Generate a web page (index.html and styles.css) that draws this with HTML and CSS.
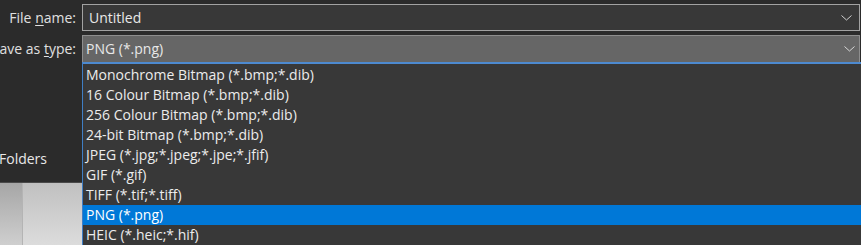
FILE: index.html
```html
<!DOCTYPE html>
<html>
<head>
<meta charset="utf-8">
<link rel="stylesheet" href="styles.css">
</head>
<body>
<div class="dialog">
  <div class="row row-name">
    <div class="label"><span>File <u>n</u>ame:</span></div>
    <div class="field input">
      <span class="value">Untitled</span>
      <svg class="chev" width="11" height="6" viewBox="0 0 11 6"><path d="M0.5 0.5 L5.5 5 L10.5 0.5" fill="none" stroke="#d0d0d0" stroke-width="1"/></svg>
    </div>
  </div>
  <div class="row row-type">
    <div class="label"><span>Save as <u>t</u>ype:</span></div>
    <div class="field combo">
      <span class="value">PNG (*.png)</span>
      <svg class="chev" width="11" height="6" viewBox="0 0 11 6"><path d="M0.5 0.5 L5.5 5 L10.5 0.5" fill="none" stroke="#d8d8d8" stroke-width="1"/></svg>
    </div>
  </div>
  <div class="lower">
    <div class="side">
      <div class="folders">Folders</div>
      <div class="preview">
        <div class="pane pane-a"></div>
        <div class="pane pane-b"></div>
      </div>
    </div>
    <ul class="list">
      <li>Monochrome Bitmap (*.bmp;*.dib)</li>
      <li>16 Colour Bitmap (*.bmp;*.dib)</li>
      <li>256 Colour Bitmap (*.bmp;*.dib)</li>
      <li>24-bit Bitmap (*.bmp;*.dib)</li>
      <li>JPEG (*.jpg;*.jpeg;*.jpe;*.jfif)</li>
      <li>GIF (*.gif)</li>
      <li>TIFF (*.tif;*.tiff)</li>
      <li class="selected">PNG (*.png)</li>
      <li>HEIC (*.heic;*.hif)</li>
    </ul>
  </div>
</div>
</body>
</html>
```
FILE: styles.css
```css
html, body {
  margin: 0;
  padding: 0;
  background: #2b2b2b;
  overflow: hidden;
}
body {
  width: 861px;
  height: 245px;
  font-family: "Open Sans", "Noto Sans", sans-serif;
  font-size: 14px;
  color: #e8e8e8;
}
.dialog {
  display: flex;
  flex-direction: column;
  height: 245px;
}
.row {
  display: grid;
  grid-template-columns: 82px 778px;
  align-items: center;
}
.row-name {
  margin-top: 4px;
  height: 27px;
}
.row-type {
  margin-top: 4px;
  height: 27px;
}
.label {
  display: flex;
  justify-content: flex-end;
  padding-right: 6px;
  color: #e0e0e0;
  white-space: nowrap;
  overflow: hidden;
}
.label span {
  flex: none;
}
.label u {
  text-decoration-thickness: 1px;
  text-underline-offset: 2px;
}
.field {
  box-sizing: border-box;
  height: 27px;
  display: flex;
  align-items: center;
  justify-content: space-between;
  border: 1px solid #a2a2a2;
}
.input {
  background: #383838;
  padding: 0 7px 0 6px;
}
.combo {
  background: #666666;
  border-color: #8e8e8e;
  border-bottom: none;
  padding: 0 7px 0 3px;
}
.value {
  line-height: 1;
}
.chev {
  display: block;
}
.combo .chev { margin-right: -3px; }
.lower {
  display: grid;
  grid-template-columns: 82px 779px;
  flex: 1;
  min-height: 0;
}
.side {
  display: flex;
  flex-direction: column;
  justify-content: flex-end;
  overflow: hidden;
}
.folders {
  color: #e8e8e8;
  margin-left: -1px;
  margin-bottom: 13px;
  line-height: 20px;
}
.preview {
  height: 62px;
  display: flex;
  border-top: 1px solid #4a4a4a;
}
.pane {
  height: 100%;
}
.pane-a {
  width: 22px;
  background: linear-gradient(#a6a6a6, #cfcfcf);
  border-right: 1px solid #b4b4b4;
}
.pane-b {
  flex: 1;
  background: linear-gradient(#c0c0c0, #dcdcdc);
}
.list {
  list-style: none;
  margin: 0;
  padding: 1px 0 0 0;
  box-sizing: border-box;
  background: #383838;
  border: 1px solid #3f7ec4;
  border-top: 2px solid #4d8ad0;
  border-bottom: none;
  border-right: none;
}
.list li {
  height: 20px;
  line-height: 20px;
  padding-left: 3px;
  color: #ececec;
  white-space: nowrap;
}
.list li.selected {
  background: #0078d7;
  color: #ffffff;
}
```
